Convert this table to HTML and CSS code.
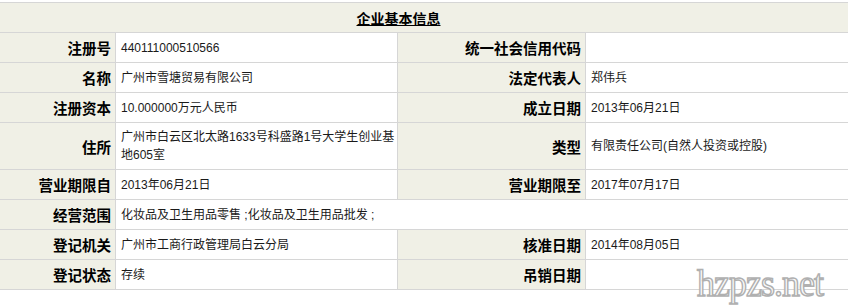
FILE: index.html
```html
<!DOCTYPE html>
<html lang="zh-CN">
<head>
<meta charset="utf-8">
<title>企业基本信息</title>
<link rel="stylesheet" href="styles.css">
</head>
<body>
<div class="page">
  <table class="info">
    <colgroup>
      <col class="c1"><col class="c2"><col class="c3"><col class="c4">
    </colgroup>
    <tr class="head"><th colspan="4"><span class="title">企业基本信息</span></th></tr>
    <tr><th>注册号</th><td>440111000510566</td><th>统一社会信用代码</th><td></td></tr>
    <tr><th>名称</th><td>广州市雪塘贸易有限公司</td><th>法定代表人</th><td>郑伟兵</td></tr>
    <tr><th>注册资本</th><td>10.000000万元人民币</td><th>成立日期</th><td>2013年06月21日</td></tr>
    <tr class="tall"><th>住所</th><td>广州市白云区北太路1633号科盛路1号大学生创业基地605室</td><th>类型</th><td>有限责任公司(自然人投资或控股)</td></tr>
    <tr><th>营业期限自</th><td>2013年06月21日</td><th>营业期限至</th><td>2017年07月17日</td></tr>
    <tr><th>经营范围</th><td colspan="3">化妆品及卫生用品零售 ;化妆品及卫生用品批发 ;</td></tr>
    <tr><th>登记机关</th><td>广州市工商行政管理局白云分局</td><th>核准日期</th><td>2014年08月05日</td></tr>
    <tr><th>登记状态</th><td>存续</td><th>吊销日期</th><td></td></tr>
  </table>
  <div class="watermark">hzpzs.net</div>
</div>
</body>
</html>
```
FILE: styles.css
```css
html, body {
  margin: 0;
  padding: 0;
  background: #ffffff;
}
.page {
  position: relative;
  padding-top: 2px;
  width: 848px;
  height: 304px;
  overflow: hidden;
}
.info {
  border-collapse: collapse;
  table-layout: fixed;
  width: 850px;
  margin-left: -1px;
}
.c1 { width: 116px; }
.c2 { width: 282px; }
.c3 { width: 188px; }
.c4 { width: 264px; }
.info th, .info td {
  border: 1px solid #d6d6d6;
  height: 30px;
  padding: 0;
  box-sizing: border-box;
  vertical-align: middle;
}
.info th {
  background: #f0f0e6;
  text-align: right;
  padding-right: 4px;
  font-family: "Noto Sans CJK SC", sans-serif;
  font-weight: 700;
  font-size: 14.5px;
  color: #000;
  white-space: nowrap;
}
.info td {
  background: #fff;
  text-align: left;
  padding: 0 2px 0 5px;
  font-family: "Liberation Sans", "Noto Sans CJK SC", sans-serif;
  font-size: 12px;
  line-height: 18px;
  color: #1a1a1a;
}
.info .head th {
  text-align: center;
  padding-right: 52px;
  font-size: 14px;
}
.title {
  text-decoration: underline;
}
.info .tall th, .info .tall td {
  height: 47px;
}
.watermark {
  position: absolute;
  left: 697px;
  top: 260px;
  font-family: "Liberation Serif", serif;
  font-size: 36px;
  letter-spacing: -1px;
  color: #fafafa;
  -webkit-text-stroke: 1.4px #b0b0b0;
  transform: scaleY(1.08);
  transform-origin: left top;
}
```
